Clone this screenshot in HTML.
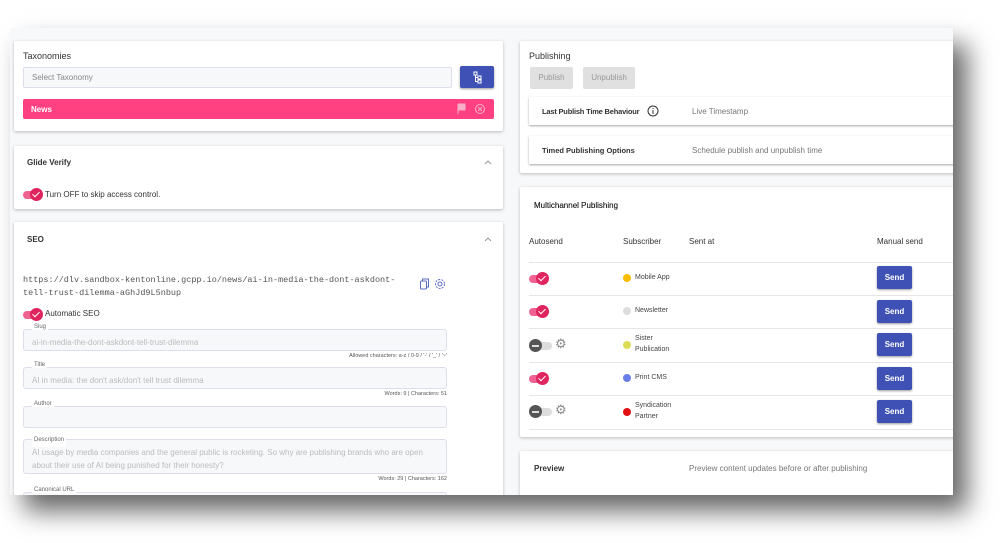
<!DOCTYPE html>
<html><head><style>
*{box-sizing:border-box;margin:0;padding:0}
body{width:1000px;height:543px;background:#fff;font-family:"Liberation Sans",sans-serif;position:relative;overflow:hidden;color:#333}
#frame{position:absolute;left:10px;top:28px;width:943px;height:467px;background:#f7f8fa;box-shadow:14px 16px 24px rgba(0,0,0,.6);overflow:hidden}
.card{position:absolute;background:#fff;box-shadow:0 1px 3px rgba(0,0,0,.25);border-radius:2px}
.a{position:absolute;white-space:nowrap}
.b{font-weight:bold}
.tog{position:absolute;width:17px;height:8px;border-radius:4px;background:#f06292}
.tog i{position:absolute;right:-3px;top:-3px;width:13px;height:13px;border-radius:50%;background:#e0245e}
.tog i:after{content:"";position:absolute;left:4px;top:2px;width:3px;height:6px;border:solid #fff;border-width:0 1.5px 1.5px 0;transform:rotate(45deg)}
.off{position:absolute;width:20px;height:8px;border-radius:4px;background:#ddd}
.off i{position:absolute;left:-3px;top:-3px;width:13px;height:13px;border-radius:50%;background:#555}
.off i:after{content:"";position:absolute;left:3px;top:5.5px;width:7px;height:2px;background:#ddd}
.fld{position:absolute;left:9px;width:424px;background:#f7f8fa;border:1px solid #dde;border-radius:3px;font-size:8px;color:#bbb;padding:8px}
.lbl{position:absolute;left:8px;top:-6px;font-size:6px;color:#666;background:#fff;padding:0 2px}
.cnt{position:absolute;right:56px;font-size:5.5px;color:#555}
.send{position:absolute;left:357px;width:35px;height:23px;background:#3f51b5;color:#fff;font-size:8px;font-weight:bold;text-align:center;line-height:23px;border-radius:2px;box-shadow:0 1px 2px rgba(0,0,0,.4)}
.dot{position:absolute;left:103px;width:8px;height:8px;border-radius:50%}
.sub{position:absolute;left:115px;font-size:7px;color:#444;line-height:11px}
.hr{position:absolute;left:9px;right:0;height:1px;background:#e6e6e6}
.chev{position:absolute;left:470px}
</style></head><body>
<div id="frame">
<div class="card" style="left:4px;top:13px;width:489px;height:90px">
 <div class="a" style="left:9px;top:10px;font-size:9px">Taxonomies</div>
 <div style="position:absolute;left:9px;top:26px;width:429px;height:21px;background:#f7f8fa;border:1px solid #dde;border-radius:2px;font-size:8px;color:#888;padding:5px 8px">Select Taxonomy</div>
 <div style="position:absolute;left:446px;top:25px;width:34px;height:22px;background:#3f51b5;border-radius:2px;box-shadow:0 1px 2px rgba(0,0,0,.4)">
  <svg width="34" height="22"><g fill="none" stroke="#fff" stroke-width="1"><rect x="14" y="6" width="3" height="3"/><rect x="18" y="10" width="3" height="3"/><rect x="18" y="14" width="3" height="3"/><path d="M15.5 9v6.5h2.5M15.5 11.5h2.5"/></g></svg>
 </div>
 <div style="position:absolute;left:9px;top:58px;width:471px;height:20px;background:#ff4081;border-radius:2px">
  <div class="a b" style="left:8px;top:6px;font-size:8px;color:#fff">News</div>
  <svg style="position:absolute;right:6px;top:4px" width="32" height="12"><path d="M2 1v10M2 1h7v6H2" fill="#f8b0c8" stroke="#f8b0c8"/><circle cx="24" cy="6" r="4.5" fill="none" stroke="#f8b0c8"/><path d="M22 4l4 4M26 4l-4 4" stroke="#f8b0c8"/></svg>
 </div>
</div>
<div class="card" style="left:4px;top:118px;width:489px;height:63px">
 <div class="a b" style="left:13px;top:12px;font-size:8px">Glide Verify</div>
 <svg class="chev" style="top:13px" width="8" height="6"><path d="M1 5l3-3 3 3" fill="none" stroke="#999"/></svg>
 <div class="tog" style="left:9px;top:45px"><i></i></div>
 <div class="a" style="left:31px;top:44px;font-size:8px">Turn OFF to skip access control.</div>
</div>
<div class="card" style="left:4px;top:194px;width:489px;height:290px">
 <div class="a b" style="left:13px;top:13px;font-size:8px">SEO</div>
 <svg class="chev" style="top:14px" width="8" height="6"><path d="M1 5l3-3 3 3" fill="none" stroke="#999"/></svg>
 <div class="a" style="left:9px;top:52px;font-family:'Liberation Mono',monospace;font-size:8.5px;color:#555;line-height:13px">https://dlv.sandbox-kentonline.gcpp.io/news/ai-in-media-the-dont-askdont-<br>tell-trust-dilemma-aGhJd9L5nbup</div>
 <svg style="position:absolute;left:405px;top:56px" width="30" height="12"><g fill="none" stroke="#5c6bc0" stroke-width="1"><rect x="1.5" y="3" width="6" height="8" rx="1"/><path d="M3.5 3V1h6v8H7.5"/><circle cx="21" cy="6" r="2"/><circle cx="21" cy="6" r="4.5" stroke-dasharray="2 1.2"/></g></svg>
 <div class="tog" style="left:9px;top:89px"><i></i></div>
 <div class="a" style="left:31px;top:87px;font-size:8px">Automatic SEO</div>
 <div class="fld" style="top:107px;height:22px">ai-in-media-the-dont-askdont-tell-trust-dilemma<span class="lbl">Slug</span></div>
 <div class="cnt" style="top:131px">Allowed characters: a-z / 0-9 / '-' / '_' / '~'</div>
 <div class="fld" style="top:145px;height:22px">AI in media: the don't ask/don't tell trust dilemma<span class="lbl">Title</span></div>
 <div class="cnt" style="top:169px">Words: 9 | Characters: 51</div>
 <div class="fld" style="top:184px;height:22px"><span class="lbl">Author</span></div>
 <div class="fld" style="top:217px;height:35px;padding:6px 8px;line-height:13px;white-space:normal">AI usage by media companies and the general public is rocketing. So why are publishing brands who are open about their use of AI being punished for their honesty?<span class="lbl">Description</span></div>
 <div class="cnt" style="top:254px">Words: 29 | Characters: 162</div>
 <div class="fld" style="top:270px;height:22px"><span class="lbl">Canonical URL</span></div>
</div>
<div class="card" style="left:510px;top:13px;width:440px;height:132px">
 <div class="a" style="left:9px;top:10px;font-size:9px">Publishing</div>
 <div class="a" style="left:10px;top:26px;width:43px;height:22px;background:#e0e0e0;border-radius:2px;font-size:8px;color:#999;text-align:center;line-height:22px">Publish</div>
 <div class="a" style="left:63px;top:26px;width:52px;height:22px;background:#e0e0e0;border-radius:2px;font-size:8px;color:#999;text-align:center;line-height:22px">Unpublish</div>
 <div style="position:absolute;left:9px;top:56px;width:440px;height:28px;background:#fff;box-shadow:0 1px 2px rgba(0,0,0,.35)">
  <div class="a b" style="left:13px;top:10px;font-size:7.5px;letter-spacing:-0.2px">Last Publish Time Behaviour</div>
  <svg style="position:absolute;left:118px;top:8px" width="12" height="12"><circle cx="6" cy="6" r="5" fill="none" stroke="#333"/><path d="M6 5v4M6 3v1" stroke="#333"/></svg>
  <div class="a" style="left:163px;top:10px;font-size:8px;color:#777">Live Timestamp</div>
 </div>
 <div style="position:absolute;left:9px;top:95px;width:440px;height:28px;background:#fff;box-shadow:0 1px 2px rgba(0,0,0,.35)">
  <div class="a b" style="left:13px;top:10px;font-size:7.5px">Timed Publishing Options</div>
  <div class="a" style="left:163px;top:10px;font-size:8px;color:#777">Schedule publish and unpublish time</div>
 </div>
</div>
<div class="card" style="left:510px;top:159px;width:440px;height:250px">
 <div class="a" style="left:14px;top:14px;font-size:8px;color:#222;text-shadow:0 0 .3px #222">Multichannel Publishing</div>
 <div class="a" style="left:9px;top:50px;font-size:8px">Autosend</div>
 <div class="a" style="left:103px;top:50px;font-size:8px">Subscriber</div>
 <div class="a" style="left:169px;top:50px;font-size:8px">Sent at</div>
 <div class="a" style="left:357px;top:50px;font-size:8px">Manual send</div>
 <div class="hr" style="top:75px"></div>
 <div class="tog" style="left:9px;top:88px"><i></i></div><div class="dot" style="top:87px;background:#fbbc05"></div><div class="sub" style="top:85px">Mobile App</div><div class="send" style="top:79px">Send</div>
 <div class="hr" style="top:108px"></div>
 <div class="tog" style="left:9px;top:121px"><i></i></div><div class="dot" style="top:120px;background:#ddd"></div><div class="sub" style="top:118px">Newsletter</div><div class="send" style="top:113px">Send</div>
 <div class="hr" style="top:141px"></div>
 <div class="off" style="left:12px;top:155px"><i></i></div><div class="a" style="left:35px;top:149px;font-size:13px;color:#888">&#9881;</div><div class="dot" style="top:154px;background:#dddd55"></div><div class="sub" style="top:146px">Sister<br>Publication</div><div class="send" style="top:146px">Send</div>
 <div class="hr" style="top:175px"></div>
 <div class="tog" style="left:9px;top:188px"><i></i></div><div class="dot" style="top:187px;background:#6a7ee8"></div><div class="sub" style="top:185px">Print CMS</div><div class="send" style="top:180px">Send</div>
 <div class="hr" style="top:208px"></div>
 <div class="off" style="left:12px;top:221px"><i></i></div><div class="a" style="left:35px;top:215px;font-size:13px;color:#888">&#9881;</div><div class="dot" style="top:221px;background:#e01010"></div><div class="sub" style="top:213px">Syndication<br>Partner</div><div class="send" style="top:213px">Send</div>
 <div class="hr" style="top:242px"></div>
</div>
<div class="card" style="left:510px;top:423px;width:440px;height:60px">
 <div class="a b" style="left:14px;top:13px;font-size:8px">Preview</div>
 <div class="a" style="left:169px;top:13px;font-size:8px;color:#777">Preview content updates before or after publishing</div>
</div>
</div>
</body></html>
